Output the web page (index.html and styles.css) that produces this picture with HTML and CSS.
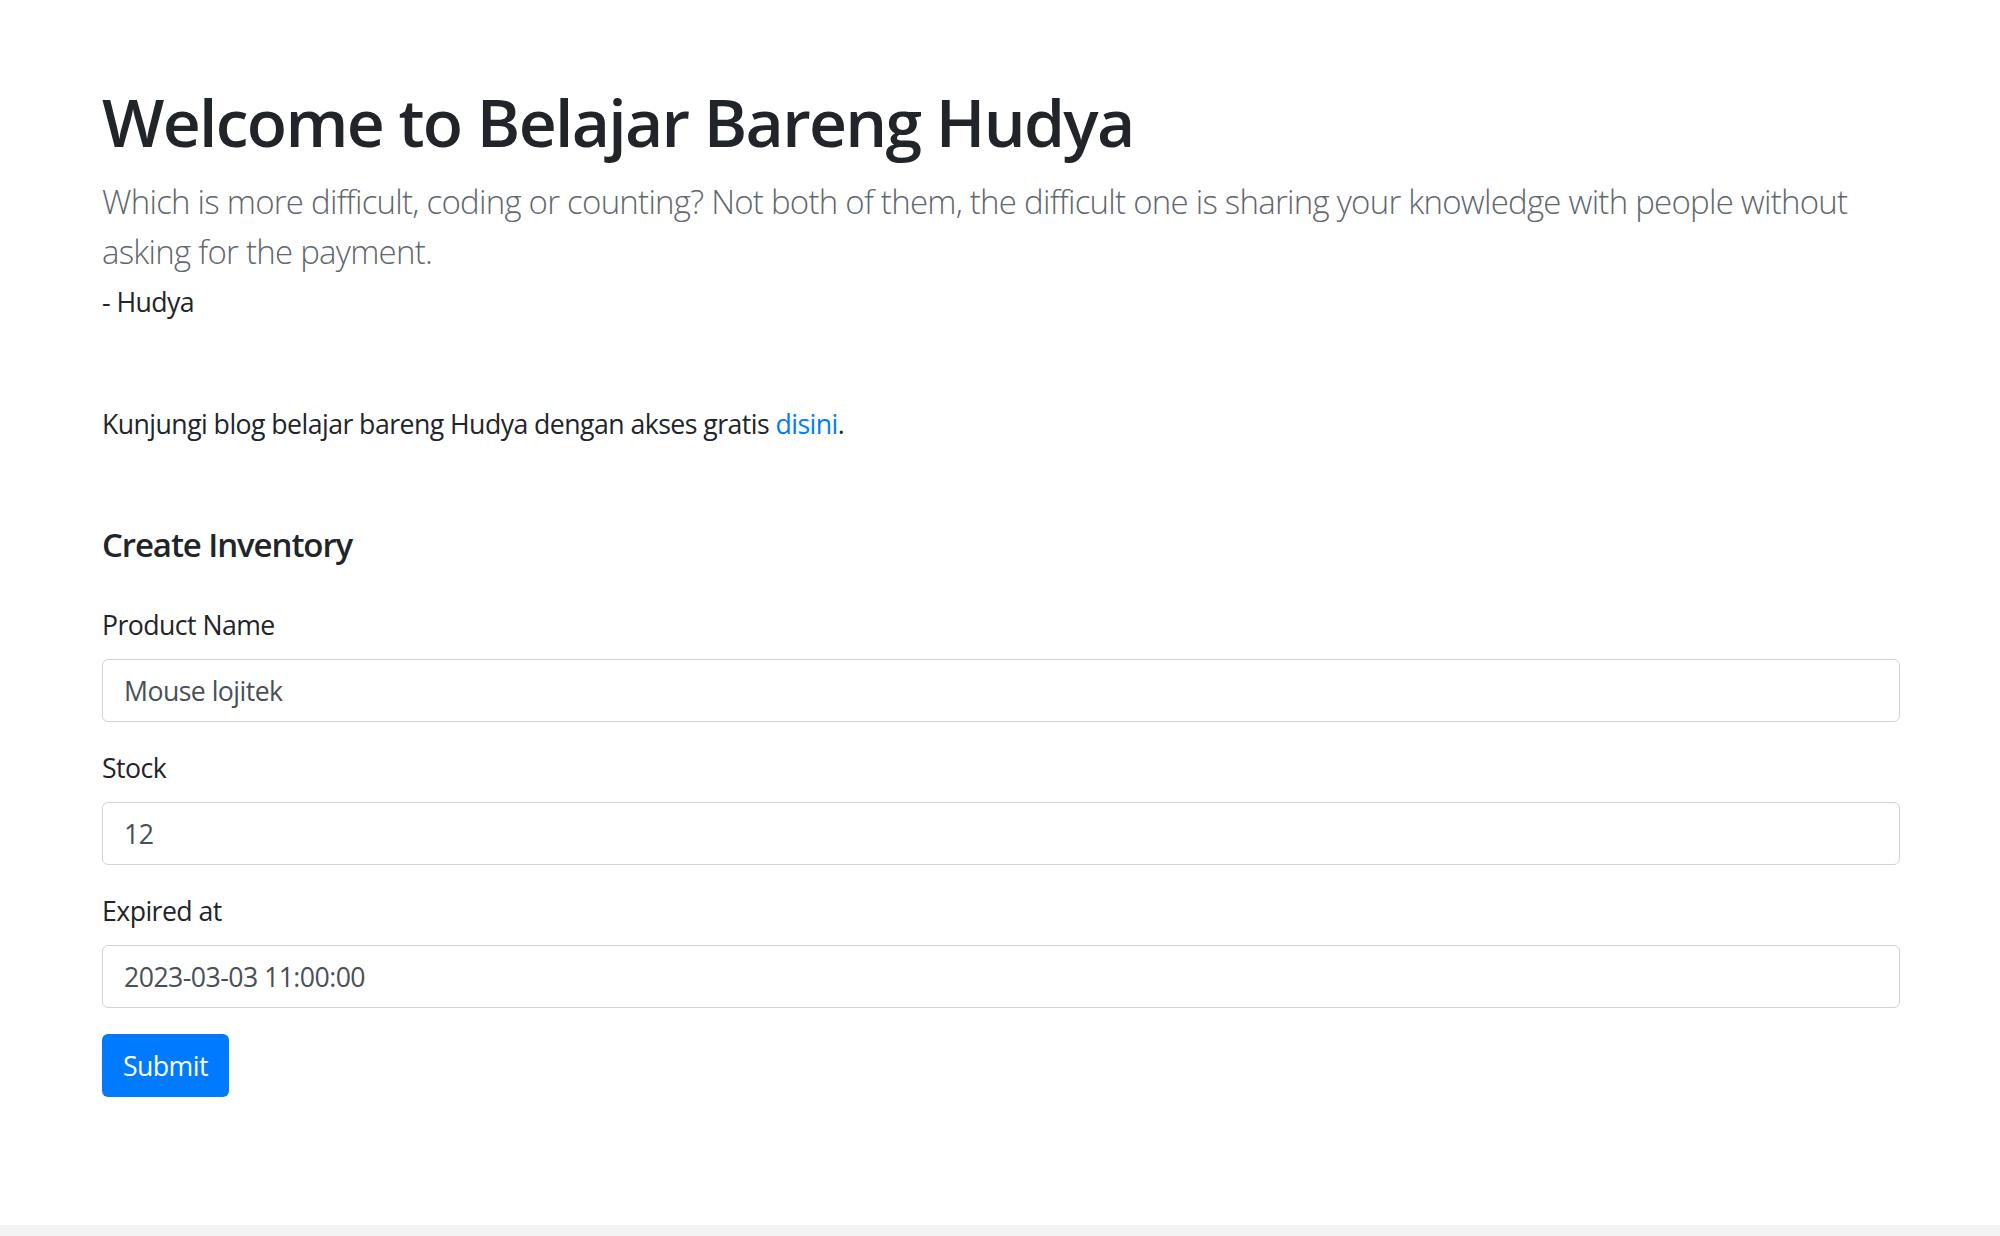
FILE: index.html
```html
<!DOCTYPE html>
<html lang="id">
<head>
<meta charset="utf-8">
<title>Belajar Bareng Hudya</title>
<link rel="stylesheet" href="styles.css">
</head>
<body>
<main class="page">
  <section class="intro">
    <h1 class="title">Welcome to Belajar Bareng Hudya</h1>
    <p class="lead">Which is more difficult, coding or counting? Not both of them, the difficult one is sharing your knowledge with people without asking for the payment.</p>
    <p class="author">- Hudya</p>
  </section>
  <p class="visit">Kunjungi blog belajar bareng Hudya dengan akses gratis <a href="#" class="link">disini</a>.</p>
  <form class="form">
    <h5 class="form-title">Create Inventory</h5>
    <div class="group">
      <label class="label" for="name">Product Name</label>
      <input class="control" id="name" type="text" value="Mouse lojitek">
    </div>
    <div class="group">
      <label class="label" for="stock">Stock</label>
      <input class="control" id="stock" type="text" value="12">
    </div>
    <div class="group">
      <label class="label" for="exp">Expired at</label>
      <input class="control" id="exp" type="text" value="2023-03-03 11:00:00">
    </div>
    <button class="btn" type="button">Submit</button>
  </form>
</main>
<div class="bottom-bar"></div>
</body>
</html>
```
FILE: styles.css
```css
* { box-sizing: border-box; }
html, body { margin: 0; padding: 0; }
body {
  background: #fff;
  color: #212529;
  font-family: "Open Sans", "Noto Sans", sans-serif;
  font-size: 26.67px;
  line-height: 40px;
  letter-spacing: -0.55px;
  width: 2000px;
  height: 1236px;
  overflow: hidden;
}
.page {
  padding: 81px 100px 0 102px;
  height: 1225px;
}
.title {
  margin: 0 0 16px 0;
  font-size: 66px;
  line-height: 80px;
  font-weight: 600;
  letter-spacing: -1.7px;
  color: #212529;
}
.lead {
  margin: 0;
  font-size: 33px;
  line-height: 50px;
  font-weight: 300;
  letter-spacing: -0.75px;
  color: #61676e;
}
.author {
  margin: 5px 0 0 0;
}
.visit {
  margin: 82px 0 0 0;
}
.link {
  color: #007bff;
  text-decoration: none;
}
.form {
  margin-top: 81px;
}
.form-title {
  margin: 0 0 40px 0;
  font-size: 33px;
  line-height: 40px;
  font-weight: 600;
  letter-spacing: -1.1px;
}
.group {
  margin-bottom: 26px;
}
.label {
  display: block;
  margin-bottom: 14px;
}
.control {
  display: block;
  width: 100%;
  height: 63px;
  padding: 0 21px;
  font-family: inherit;
  font-size: 26.67px;
  letter-spacing: -0.55px;
  color: #495057;
  background: #fff;
  border: 1.5px solid #ced4da;
  border-radius: 6px;
  outline: none;
}
.btn {
  display: block;
  height: 63px;
  padding: 0 21px;
  font-family: inherit;
  font-size: 26.67px;
  letter-spacing: -0.55px;
  color: #fff;
  background: #007bff;
  border: 0;
  border-radius: 6px;
}
.bottom-bar {
  height: 11px;
  background: #f3f3f3;
}
```
